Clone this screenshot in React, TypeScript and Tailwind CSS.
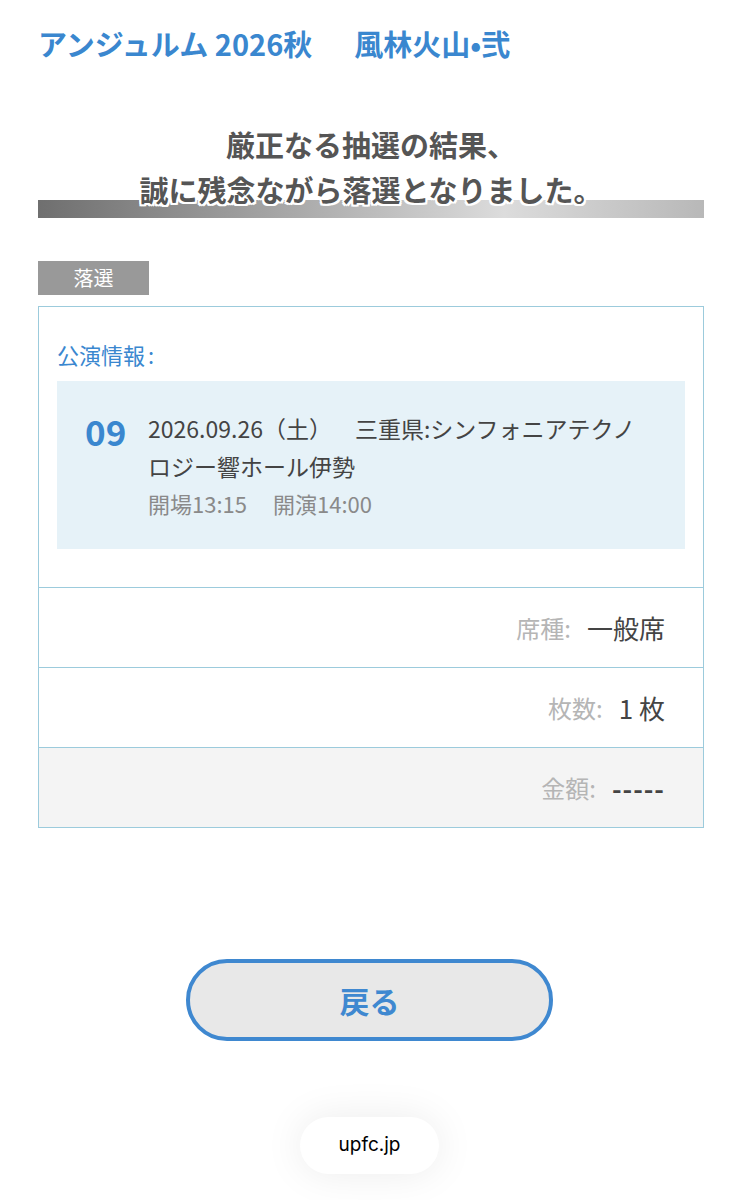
import React from "react"

const jp = { fontFamily: '"Noto Sans CJK JP", "Noto Sans", sans-serif' }

function InfoRow({ label, value, gray, bold }: { label: string; value: string; gray?: boolean; bold?: boolean }) {
  return (
    <div className={`flex h-[80px] items-center justify-end border-t border-[#9ccbdc] pr-[38px] ${gray ? "bg-[#f4f4f4]" : "bg-white"}`}>
      <span className="text-[24px] text-[#b5b5b5]">{label}:</span>
      <span className={`ml-[16px] text-[26px] text-[#444] ${bold ? "font-bold tracking-[1px]" : ""}`}>{value}</span>
    </div>
  )
}

export default function App() {
  return (
    <div className="min-h-[1200px] bg-white pl-[38px] pr-[35px]" style={jp}>
      <h1 className="pt-[22px] text-[29px] font-bold leading-[42px] text-[#3a87cf]">
        アンジュルム 2026秋<span className="ml-[42px]">風林火山•弐</span>
      </h1>

      <div className="mt-[58px]">
        <p className="relative z-10 text-center text-[29px] font-bold leading-[45px] text-[#555] [text-shadow:2px_0_0_#fff,-2px_0_0_#fff,0_2px_0_#fff,0_-2px_0_#fff,2px_2px_0_#fff,-2px_-2px_0_#fff,2px_-2px_0_#fff,-2px_2px_0_#fff]">
          厳正なる抽選の結果、
          <br />
          誠に残念ながら落選となりました。
        </p>
        <div className="-mt-[12px] h-[18px] bg-gradient-to-r from-[#6f6f6f] via-[#dcdcdc] via-70% to-[#b8b8b8]" />
      </div>

      <div className="mt-[43px] flex h-[34px] w-[111px] items-center justify-center bg-[#999] text-[20px] text-white">
        落選
      </div>

      <div className="mt-[11px] border border-[#9ccbdc]">
        <div className="px-[18px] pb-[38px] pt-[30px]">
          <div className="text-[22px] leading-[34px] text-[#3a87cf]">
            公演情報<span className="ml-[3px]">:</span>
          </div>
          <div className="mt-[10px] flex bg-[#e6f2f8] pb-[28px] pl-[28px] pr-[34px] pt-[28px]">
            <div className="w-[63px] shrink-0 text-[35px] font-bold leading-[44px] text-[#3a87cf]">09</div>
            <div>
              <p className="text-[23px] leading-[38px] text-[#444] [text-spacing-trim:space-all]">
                {"2026.09.26（土）\u3000三重県:シンフォニアテクノロジー響ホール伊勢"}
              </p>
              <p className="text-[22px] leading-[36px] text-[#8a8a8a]">
                開場13:15<span className="ml-[26px]">開演14:00</span>
              </p>
            </div>
          </div>
        </div>
        <InfoRow label="席種" value="一般席" />
        <InfoRow label="枚数" value="1 枚" />
        <InfoRow label="金額" value="-----" gray bold />
      </div>

      <div className="mt-[131px] flex justify-center pr-[3px]">
        <button className="h-[82px] w-[367px] rounded-full border-4 border-[#3f88d0] bg-[#e8e8e8] text-[30px] font-bold text-[#3f88d0]">
          戻る
        </button>
      </div>

      <div className="mt-[76px] flex justify-center pr-[3px]">
        <div
          className="flex h-[57px] w-[139px] items-center justify-center rounded-full bg-white text-[19px] text-black shadow-[0_0_40px_rgba(0,0,0,0.08)]"
          style={{ fontFamily: '"Inter", "Liberation Sans", sans-serif' }}
        >
          upfc.jp
        </div>
      </div>
    </div>
  )
}
